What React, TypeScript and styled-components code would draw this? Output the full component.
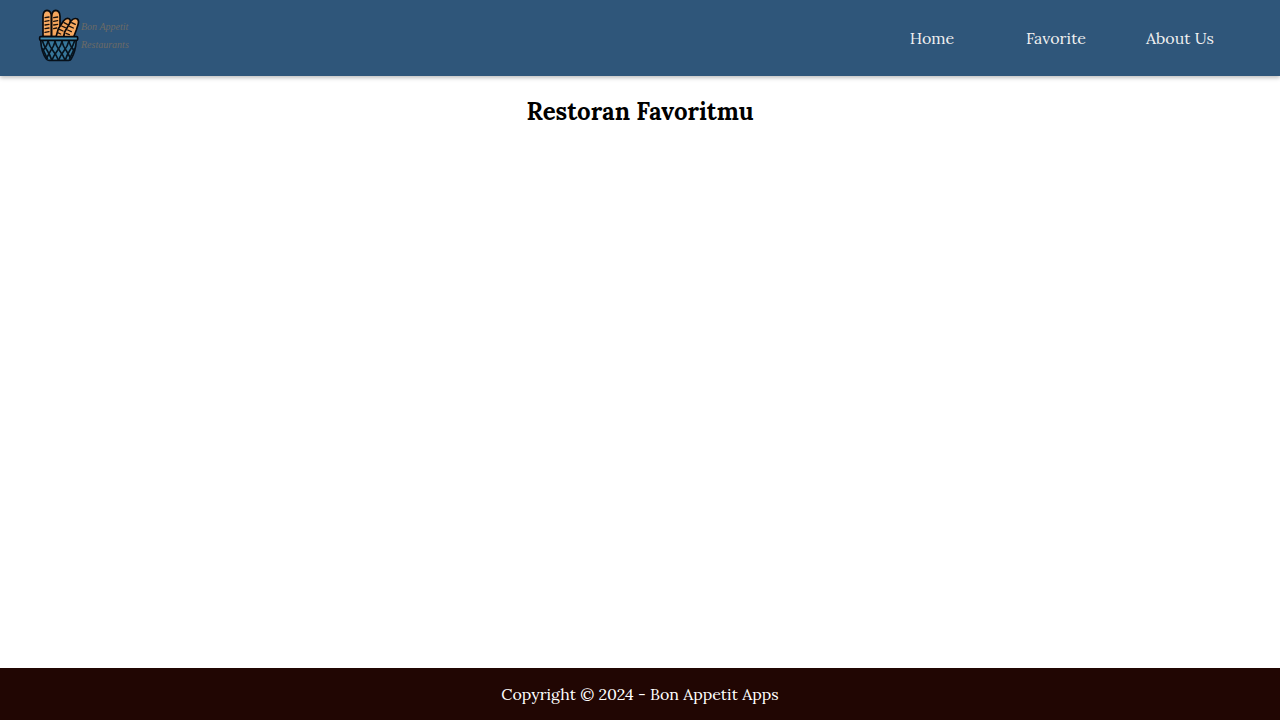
import React from 'react';
import styled, { createGlobalStyle } from 'styled-components';

const GlobalStyle = createGlobalStyle`
  * {
    box-sizing: border-box;
  }

  body {
    margin: 0;
    background: #ffffff;
    color: #000000;
    font-family: Lora, 'Liberation Serif', serif;
    font-size: 16px;
    line-height: 20px;
  }
`;

const Page = styled.div`
  display: flex;
  flex-direction: column;
  min-height: 100vh;
`;

const Header = styled.header`
  display: flex;
  align-items: center;
  justify-content: space-between;
  min-height: 76px;
  padding: 0 38px;
  background: #2f567a;
  box-shadow: 0 2px 4px rgba(0, 0, 0, 0.25);
`;

const Brand = styled.a`
  display: flex;
  align-items: flex-start;
  gap: 1px;
  height: 60px;
  color: #6b6a66;
  text-decoration: none;
`;

const BrandName = styled.span`
  display: flex;
  flex-direction: column;
  padding-top: 10px;
  font-family: 'Liberation Serif', serif;
  font-size: 10px;
  font-style: italic;
  line-height: 18px;
  white-space: nowrap;
`;

const NavList = styled.ul`
  display: flex;
  margin: 0;
  padding: 0;
  list-style: none;
`;

const NavItem = styled.li`
  width: 124px;
  text-align: center;
`;

const NavLink = styled.a`
  display: block;
  padding: 12px 0;
  color: #f0f0f0;
  text-decoration: none;
`;

const Main = styled.main`
  flex: 1;
  padding: 20px;
`;

const Title = styled.h2`
  margin: 0;
  font-size: 24px;
  line-height: 32px;
  text-align: center;
`;

const Footer = styled.footer`
  padding: 16px;
  background: #210603;
  color: #ffffff;
  text-align: center;
`;

const links = ['Home', 'Favorite', 'About Us'];

function BreadBasket() {
  return (
    <svg width="42" height="54" viewBox="24 24 126 162" fill="none" aria-hidden="true">
      <g stroke="#08090c" strokeWidth="5" strokeLinejoin="round">
        <path d="M39 110V49Q39 32 51 31Q64 32 64 49V110Z" fill="#f8aa62" />
        <path d="M65 110V49Q66 32 77 31Q90 32 90 49V110Z" fill="#f5a55b" />
        <path d="M78 111 85 86 101 62Q109 52 117 56Q124 61 119 73L100 111Z" fill="#f5a55b" />
        <path d="M101 111 104 96 123 63Q132 52 142 57Q148 62 144 74L139 90 131 111Z" fill="#f8aa62" />
      </g>
      <g stroke="#18110d" strokeWidth="4" strokeLinecap="round">
        <path d="m45 53 12-2m-12 13 12-2m-12 13 12-2m-12 13 12-2m-12 13 12-2" />
        <path d="m71 53 12-2m-12 13 12-2m-12 13 12-2m-12 13 9-2" />
        <path d="m102 68 10 5m-17 5 11 5m-18 5 11 5m-16 5 9 4" />
        <path d="m125 68 11 5m-17 6 11 5m-17 6 11 5m-16 5 10 4" />
      </g>
      <path
        d="M32 120Q34 157 49 177Q51 181 57 181H116Q122 181 124 176Q137 154 139 120Z"
        fill="#37779b"
        stroke="#07101a"
        strokeWidth="5"
      />
      <g stroke="#07131e" strokeWidth="5">
        <path d="M37 122Q42 139 52 152Q60 164 65 180M54 122Q58 139 69 152Q79 165 85 180M74 122Q79 139 89 152Q99 165 105 180M95 122Q99 139 109 152L121 174M116 122Q120 138 131 151M37 144 53 178" />
        <path d="M134 122Q129 139 119 152Q111 164 106 180M117 122Q113 139 102 152Q92 165 86 180M97 122Q92 139 82 152Q72 165 66 180M76 122Q72 139 62 152L50 174M55 122Q51 138 40 151M134 144 118 178" />
      </g>
      <rect
        x="29"
        y="110"
        width="114"
        height="11"
        rx="3"
        fill="#4189ac"
        stroke="#05090f"
        strokeWidth="5"
      />
    </svg>
  );
}

export default function App() {
  return (
    <>
      <GlobalStyle />
      <Page>
        <Header>
          <Brand href="#home">
            <BreadBasket />
            <BrandName>
              <span>Bon Appetit</span>
              <span>Restaurants</span>
            </BrandName>
          </Brand>
          <nav aria-label="Main">
            <NavList>
              {links.map((label) => (
                <NavItem key={label}>
                  <NavLink href={`#${label.toLowerCase().replace(' ', '-')}`}>{label}</NavLink>
                </NavItem>
              ))}
            </NavList>
          </nav>
        </Header>
        <Main>
          <Title>Restoran Favoritmu</Title>
        </Main>
        <Footer>Copyright © 2024 - Bon Appetit Apps</Footer>
      </Page>
    </>
  );
}
